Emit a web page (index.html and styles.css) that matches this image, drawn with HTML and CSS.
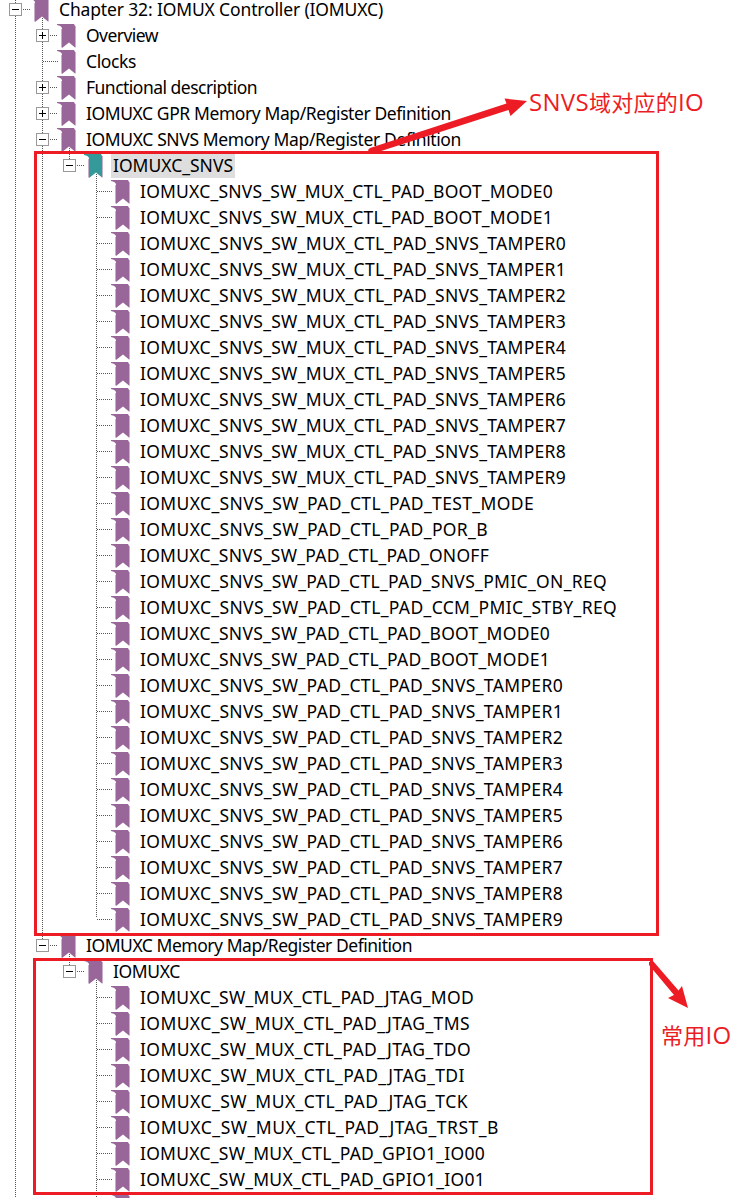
FILE: index.html
```
<!DOCTYPE html>
<html lang="zh">
<head>
<meta charset="utf-8">
<title>IOMUXC</title>
<link rel="stylesheet" href="styles.css">
</head>
<body>
<svg class="defs" width="0" height="0"><symbol id="bm" viewBox="0 0 20 24"><path d="M0 0H17L18 2V23.500L12 18.500L5 24V4Q4 1.500 0 1Z" fill="currentColor"/><path d="M4.500 5V23.500M18.500 2V23.500" fill="none" stroke="#c9aec9"/></symbol></svg>
<main class="page">
<div class="tree" id="tree"></div>
<div class="frame frame-snvs"></div>
<div class="frame frame-common"></div>
<svg class="arrows" width="745" height="1198"><g fill="#ed1c24"><path d="M368 150L370 148L506.500 103.500L504.500 98.500L527 101L510.500 116L508.500 110L378 152H369Z"/><path d="M649 965L649 962L653 961L678.500 990.500L682 986L688 1008L668 998L674 995Z"/></g></svg>
<div class="note note-snvs">SNVS<span class="han">域对应的</span>IO</div>
<div class="note note-common"><span class="han">常用</span>IO</div>
</main>
<script src="tree.js"></script>
</body>
</html>
```
FILE: tree.js
```
const leaf = (label, width) => ({ label, width });
const node = (label, width, open, children = [], extra = {}) => ({ label, width, open, children, ...extra });
const P = 'IOMUXC_SNVS_SW_';
const tampers = (kind, width) => Array.from({ length: 10 }, (_, i) => leaf(`${P}${kind}_CTL_PAD_SNVS_TAMPER${i}`, width));
const data = [
  node('Chapter 32: IOMUX Controller (IOMUXC)', 325, true, [
    node('Overview', 73, false),
    leaf('Clocks', 51),
    node('Functional description', 172, false),
    node('IOMUXC GPR Memory Map/Register Definition', 366, false),
    node('IOMUXC SNVS Memory Map/Register Definition', 376, true, [
      node('IOMUXC_SNVS', 121, true, [
        leaf(P + 'MUX_CTL_PAD_BOOT_MODE0', 414),
        leaf(P + 'MUX_CTL_PAD_BOOT_MODE1', 414),
        ...tampers('MUX', 427),
        leaf(P + 'PAD_CTL_PAD_TEST_MODE', 395),
        leaf(P + 'PAD_CTL_PAD_POR_B', 349),
        leaf(P + 'PAD_CTL_PAD_ONOFF', 350),
        leaf(P + 'PAD_CTL_PAD_SNVS_PMIC_ON_REQ', 468),
        leaf(P + 'PAD_CTL_PAD_CCM_PMIC_STBY_REQ', 478),
        leaf(P + 'PAD_CTL_PAD_BOOT_MODE0', 411),
        leaf(P + 'PAD_CTL_PAD_BOOT_MODE1', 411),
        ...tampers('PAD', 424)
      ], { selected: true })
    ]),
    node('IOMUXC Memory Map/Register Definition', 327, true, [
      node('IOMUXC', 68, true, [
        leaf('IOMUXC_SW_MUX_CTL_PAD_JTAG_MOD', 335),
        leaf('IOMUXC_SW_MUX_CTL_PAD_JTAG_TMS', 331),
        leaf('IOMUXC_SW_MUX_CTL_PAD_JTAG_TDO', 332),
        leaf('IOMUXC_SW_MUX_CTL_PAD_JTAG_TDI', 326),
        leaf('IOMUXC_SW_MUX_CTL_PAD_JTAG_TCK', 329),
        leaf('IOMUXC_SW_MUX_CTL_PAD_JTAG_TRST_B', 360),
        leaf('IOMUXC_SW_MUX_CTL_PAD_GPIO1_IO00', 346),
        leaf('IOMUXC_SW_MUX_CTL_PAD_GPIO1_IO01', 346),
        leaf('', 0)
      ])
    ])
  ])
];
function build(items, level) {
  const ul = document.createElement('ul');
  ul.className = 'level level-' + level;
  for (const item of items) {
    const li = document.createElement('li');
    const toggle = item.children ? `<span class="toggle${item.open ? '' : ' plus'}"></span><span class="link"></span>` : '<span class="link long"></span>';
    li.innerHTML = `<div class="row${item.selected ? ' selected' : ''}">${toggle}<svg class="mark" width="20" height="24"><use href="#bm"/></svg><span class="label"><span class="text">${item.label}</span></span></div>`;
    if (item.children && item.children.length) li.append(build(item.children, level + 1));
    ul.append(li);
  }
  return ul;
}
document.getElementById('tree').append(build(data, 0));
const flat = [];
(function walk(items) { for (const i of items) { flat.push(i); if (i.children) walk(i.children); } })(data);
document.querySelectorAll('.text').forEach((el, i) => {
  const item = flat[i];
  if (item.label) el.style.letterSpacing = (item.width - 1 - el.getBoundingClientRect().width) / item.label.length + 'px';
});
```
FILE: styles.css
```
body { margin: 0; background: #fff; }
.defs { position: absolute; }
.page { position: relative; width: 745px; height: 1198px; overflow: hidden; }
.tree { margin-top: -4px; color: #000; font: 17.5px/25px "Noto Sans", sans-serif; }
.level { list-style: none; margin: 0; padding: 0; background: repeating-linear-gradient(#555 0 1px, transparent 1px 2px) 15px 0 / 1px 100% no-repeat; }
.level .level { margin: -4px 0 0 27px; padding-top: 4px; }
.level-1 { background-size: 1px 925px; }
.level-2 { background-size: 1px 12px; }
li:nth-child(5) .level-3 { background-size: 1px 743px; }
.row { display: flex; align-items: center; height: 26px; padding-left: 9px; }
.level-0 > li > .row > .label { line-height: 18px; }
.toggle { box-sizing: border-box; width: 13px; height: 13px; border: 1px solid #999; background: linear-gradient(#000, #000) center / 7px 1px no-repeat, #fff; }
.toggle.plus { background: linear-gradient(#000, #000) center / 7px 1px no-repeat, linear-gradient(#000, #000) center / 1px 7px no-repeat, #fff; }
.link { width: 8px; height: 1px; background: repeating-linear-gradient(90deg, #555 0 1px, transparent 1px 2px); margin-left: 1px; }
.link.long { width: 15px; margin-left: 7px; }
.mark { flex: none; margin: 2px 0 0 -1px; color: #996699; }
.label { margin-left: 7px; padding: 0 2px; white-space: pre; }
.text { display: inline-block; }
.selected .mark { color: #339999; }
.selected .label { background: #dedede; }
.frame { position: absolute; box-sizing: border-box; border: 3px solid #ed1c24; }
.frame-snvs { left: 34px; top: 151px; width: 625px; height: 785px; }
.frame-common { left: 33px; top: 958px; width: 620px; height: 237px; }
.arrows { position: absolute; left: 0; top: 0; }
.note { position: absolute; color: #ed1c24; font: 24px/30px "Open Sans", "Noto Sans CJK SC", sans-serif; letter-spacing: .3px; white-space: nowrap; }
.han { font-family: "Noto Sans CJK SC", sans-serif; font-size: 22px; line-height: 1; }
.note-snvs { left: 529px; top: 87px; }
.note-common { left: 661px; top: 1020px; }
```
